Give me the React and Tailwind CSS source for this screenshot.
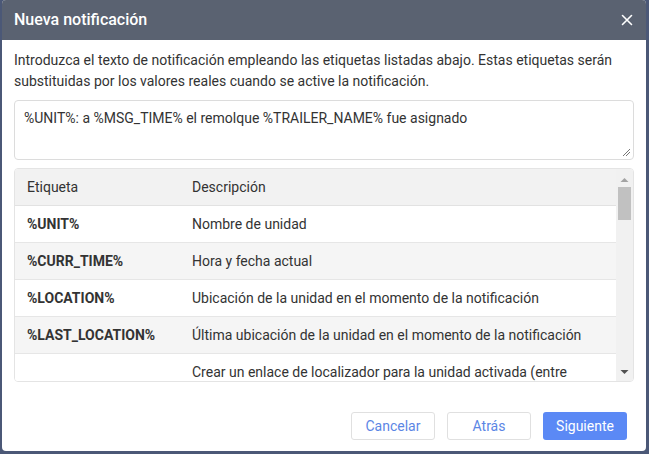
import React from "react";

const rows = [
  { tag: "%UNIT%", desc: "Nombre de unidad" },
  { tag: "%CURR_TIME%", desc: "Hora y fecha actual" },
  { tag: "%LOCATION%", desc: "Ubicación de la unidad en el momento de la notificación" },
  { tag: "%LAST_LOCATION%", desc: "Última ubicación de la unidad en el momento de la notificación" },
  { tag: "", desc: "Crear un enlace de localizador para la unidad activada (entre" },
];

export default function App() {
  return (
    <div
      className="w-[649px] h-[454px] bg-[#4b5877] pl-[2px] pr-[3px] pb-[3px] overflow-hidden"
      style={{ fontFamily: "Roboto, 'Liberation Sans', sans-serif" }}
    >
      <div className="h-full bg-white rounded-[4px] overflow-hidden flex flex-col">
        <div className="h-[40px] bg-[#5a6271] flex items-center justify-between pl-[12px] pr-[12px] shrink-0">
          <span className="text-white text-[16px] font-medium">Nueva notificación</span>
          <svg width="12" height="12" viewBox="0 0 12 12" className="mr-[1px]">
            <path d="M1.5 1.5 L10.5 10.5 M10.5 1.5 L1.5 10.5" stroke="#fff" strokeWidth="1.6" strokeLinecap="round" />
          </svg>
        </div>
        <div className="flex-1 flex flex-col px-[12px]">
          <p className="mt-[10px] text-[14px] leading-[21px] text-[#333]">
            Introduzca el texto de notificación empleando las etiquetas listadas abajo. Estas etiquetas serán substituidas por los valores reales cuando se active la notificación.
          </p>
          <div className="mt-[8px] h-[60px] border border-[#dcdcdc] rounded-[4px] relative px-[9px] pt-[7px] text-[14px] text-[#333]">
            %UNIT%: a %MSG_TIME% el remolque %TRAILER_NAME% fue asignado
            <svg width="9" height="9" viewBox="0 0 9 9" className="absolute right-[2px] bottom-[2px]">
              <path d="M8 1 L1 8 M8 4 L4 8" stroke="#777" strokeWidth="1" />
            </svg>
          </div>
          <div className="mt-[8px] h-[214px] border border-[#e4e4e4] rounded-[4px] overflow-hidden flex">
            <div className="flex-1 flex flex-col">
              <div className="h-[37px] shrink-0 bg-[#f2f2f2] flex items-center border-b border-[#e2e2e2] text-[14px] text-[#333]">
                <span className="w-[177px] pl-[12px]">Etiqueta</span>
                <span>Descripción</span>
              </div>
              {rows.map((r, i) => (
                <div
                  key={i}
                  className={`h-[37px] shrink-0 flex items-center border-b border-[#e6e6e6] text-[14px] text-[#333] ${i % 2 === 1 ? "bg-[#f5f5f5]" : "bg-white"}`}
                >
                  <span className="w-[177px] pl-[12px] font-bold text-[14px] text-[#333]">{r.tag}</span>
                  <span className="whitespace-nowrap">{r.desc}</span>
                </div>
              ))}
            </div>
            <div className="w-[17px] shrink-0 bg-[#f1f1f1] flex flex-col items-center">
              <svg width="9" height="6" viewBox="0 0 9 6" className="mt-[8px]">
                <path d="M0.5 5 L4.5 1 L8.5 5 Z" fill="#a3a3a3" />
              </svg>
              <div className="mt-[4px] w-[13px] h-[33px] bg-[#c1c1c1]" />
              <div className="flex-1" />
              <svg width="9" height="6" viewBox="0 0 9 6" className="mb-[6px]">
                <path d="M0.5 1 L4.5 5 L8.5 1 Z" fill="#505050" />
              </svg>
            </div>
          </div>
          <div className="mt-[30px] flex justify-end gap-[12px] pr-[7px]">
            <button className="w-[84px] h-[28px] border border-[#e0e0e0] rounded-[3px] bg-white text-[14px] text-[#5b86e5]">Cancelar</button>
            <button className="w-[84px] h-[28px] border border-[#e0e0e0] rounded-[3px] bg-white text-[14px] text-[#5b86e5]">Atrás</button>
            <button className="w-[84px] h-[28px] rounded-[3px] bg-[#5b89f5] text-[14px] text-white">Siguiente</button>
          </div>
        </div>
      </div>
    </div>
  );
}
